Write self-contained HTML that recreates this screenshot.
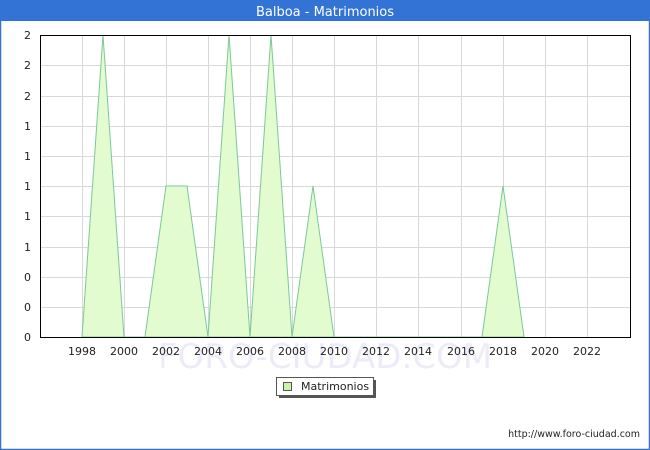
<!DOCTYPE html><html><head><style>body{margin:0;width:650px;height:450px;overflow:hidden;background:#fff;font-family:"DejaVu Sans","Liberation Sans",sans-serif}</style></head><body>
<svg width="650" height="450" xmlns="http://www.w3.org/2000/svg" style="position:absolute;left:0;top:0">
<rect x="0.5" y="0.5" width="649" height="449" fill="#fff" stroke="#3373d6" stroke-width="1.5"/>
<rect x="0" y="0" width="650" height="21" fill="#3373d6"/>
<text x="325" y="16" fill="#fff" font-size="13" text-anchor="middle" font-family="DejaVu Sans,sans-serif">Balboa - Matrimonios</text>
<g stroke="#d8d8d8" stroke-width="1">
<line x1="40" x2="630" y1="65.5" y2="65.5"/><line x1="40" x2="630" y1="96.5" y2="96.5"/><line x1="40" x2="630" y1="126.5" y2="126.5"/><line x1="40" x2="630" y1="156.5" y2="156.5"/><line x1="40" x2="630" y1="186.5" y2="186.5"/><line x1="40" x2="630" y1="216.5" y2="216.5"/><line x1="40" x2="630" y1="247.5" y2="247.5"/><line x1="40" x2="630" y1="277.5" y2="277.5"/><line x1="40" x2="630" y1="307.5" y2="307.5"/>
<line x1="82.5" x2="82.5" y1="35" y2="337"/><line x1="124.5" x2="124.5" y1="35" y2="337"/><line x1="166.5" x2="166.5" y1="35" y2="337"/><line x1="208.5" x2="208.5" y1="35" y2="337"/><line x1="250.5" x2="250.5" y1="35" y2="337"/><line x1="292.5" x2="292.5" y1="35" y2="337"/><line x1="334.5" x2="334.5" y1="35" y2="337"/><line x1="376.5" x2="376.5" y1="35" y2="337"/><line x1="418.5" x2="418.5" y1="35" y2="337"/><line x1="461.5" x2="461.5" y1="35" y2="337"/><line x1="503.5" x2="503.5" y1="35" y2="337"/><line x1="545.5" x2="545.5" y1="35" y2="337"/><line x1="587.5" x2="587.5" y1="35" y2="337"/>
</g>
<text x="325" y="368" fill="#ececf8" font-size="34" text-anchor="middle" font-family="DejaVu Sans,sans-serif">FORO-CIUDAD.COM</text>
<polygon points="82,337 103,35 124,337 145,337 166,186 187,186 208,337 229,35 250,337 271,35 292,337 313,186 334,337 482,337 503,186 524,337" fill="#e2fccf" stroke="#7cc79a" stroke-width="1"/>
<line x1="40" x2="630" y1="337.5" y2="337.5" stroke="#fff" stroke-width="0"/>
<rect x="40.5" y="35.5" width="590" height="302" fill="none" stroke="#000" stroke-width="1"/>
<g font-size="11" fill="#222" text-anchor="end">
<text x="31" y="39">2</text><text x="31" y="69">2</text><text x="31" y="100">2</text><text x="31" y="130">1</text><text x="31" y="160">1</text><text x="31" y="190">1</text><text x="31" y="220">1</text><text x="31" y="251">1</text><text x="31" y="281">0</text><text x="31" y="311">0</text><text x="31" y="341">0</text>
</g>
<g font-size="11" fill="#222" text-anchor="middle">
<text x="82" y="355">1998</text><text x="124" y="355">2000</text><text x="166" y="355">2002</text><text x="208" y="355">2004</text><text x="250" y="355">2006</text><text x="292" y="355">2008</text><text x="334" y="355">2010</text><text x="376" y="355">2012</text><text x="418" y="355">2014</text><text x="461" y="355">2016</text><text x="503" y="355">2018</text><text x="545" y="355">2020</text><text x="587" y="355">2022</text>
</g>
<rect x="279" y="380" width="97" height="18" fill="#555"/>
<rect x="276.5" y="377.5" width="97" height="18" fill="#fff" stroke="#555"/>
<rect x="283.5" y="382.5" width="8" height="8" fill="#c8f5a8" stroke="#555"/>
<text x="301" y="390" font-size="11" fill="#222">Matrimonios</text>
<text x="640" y="437" font-size="9.5" fill="#222" text-anchor="end">http://www.foro-ciudad.com</text>
</svg>
</body></html>
